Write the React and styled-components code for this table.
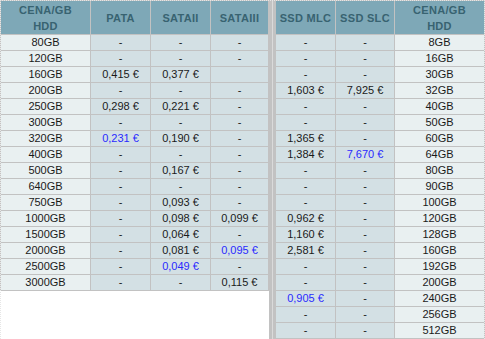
import React from "react";
import styled, { createGlobalStyle } from "styled-components";

const GlobalStyle = createGlobalStyle`
  html, body {
    margin: 0;
    padding: 0;
    background: #ffffff;
  }
  body {
    font-family: "Liberation Sans", Arial, sans-serif;
    font-size: 11px;
  }
`;

const hddRows = [
  ["80GB", "-", "-", "-"],
  ["120GB", "-", "-", "-"],
  ["160GB", "0,415 €", "0,377 €", ""],
  ["200GB", "-", "-", "-"],
  ["250GB", "0,298 €", "0,221 €", "-"],
  ["300GB", "-", "-", "-"],
  ["320GB", "*0,231 €", "0,190 €", "-"],
  ["400GB", "-", "-", "-"],
  ["500GB", "-", "0,167 €", "-"],
  ["640GB", "-", "-", "-"],
  ["750GB", "-", "0,093 €", "-"],
  ["1000GB", "-", "0,098 €", "0,099 €"],
  ["1500GB", "-", "0,064 €", "-"],
  ["2000GB", "-", "0,081 €", "*0,095 €"],
  ["2500GB", "-", "*0,049 €", "-"],
  ["3000GB", "-", "-", "0,115 €"],
];

const ssdRows = [
  ["-", "-", "8GB"],
  ["-", "-", "16GB"],
  ["-", "-", "30GB"],
  ["1,603 €", "7,925 €", "32GB"],
  ["-", "-", "40GB"],
  ["-", "-", "50GB"],
  ["1,365 €", "-", "60GB"],
  ["1,384 €", "*7,670 €", "64GB"],
  ["-", "-", "80GB"],
  ["-", "-", "90GB"],
  ["-", "-", "100GB"],
  ["0,962 €", "-", "120GB"],
  ["1,160 €", "-", "128GB"],
  ["2,581 €", "-", "160GB"],
  ["-", "-", "192GB"],
  ["-", "-", "200GB"],
  ["*0,905 €", "-", "240GB"],
  ["-", "-", "256GB"],
  ["-", "-", "512GB"],
];

// values starting with * are the best price, shown in blue
const Price = ({ value }) => {
  const best = value.startsWith("*");
  return <Cell $best={best}>{best ? value.slice(1) : value}</Cell>;
};

const App = () => {
  return (
    <>
      <GlobalStyle />
      <Page>
        <Table $width={269}>
          <colgroup>
            <col style={{ width: 90 }} />
            <col style={{ width: 60 }} />
            <col style={{ width: 60 }} />
            <col />
          </colgroup>
          <thead>
            <tr>
              <Head>
                CENA/GB
                <br />
                HDD
              </Head>
              <Head>PATA</Head>
              <Head>SATAII</Head>
              <Head>SATAIII</Head>
            </tr>
          </thead>
          <tbody>
            {hddRows.map(([size, ...prices]) => (
              <tr key={size}>
                <SizeCell>{size}</SizeCell>
                {prices.map((p, i) => (
                  <Price key={i} value={p} />
                ))}
              </tr>
            ))}
          </tbody>
        </Table>
        <RightSide>
          <Divider />
          <Table $width={210}>
            <colgroup>
              <col style={{ width: 60 }} />
              <col style={{ width: 59 }} />
              <col />
            </colgroup>
            <thead>
              <tr>
                <Head>SSD MLC</Head>
                <Head>SSD SLC</Head>
                <Head>
                  CENA/GB
                  <br />
                  HDD
                </Head>
              </tr>
            </thead>
            <tbody>
              {ssdRows.map(([mlc, slc, size]) => (
                <tr key={size}>
                  <Price value={mlc} />
                  <Price value={slc} />
                  <SizeCell>{size}</SizeCell>
                </tr>
              ))}
            </tbody>
          </Table>
        </RightSide>
      </Page>
    </>
  );
};
export default App;

const Page = styled.div`
  position: relative;
  width: 485px;
  height: 339px;
  display: flex;
  align-items: flex-start;
  overflow: hidden;
  &::after {
    content: "";
    position: absolute;
    inset: 0;
    border: 1px dotted #e6e6e6;
    border-bottom: none;
    box-sizing: border-box;
    pointer-events: none;
  }
`;

const Table = styled.table`
  width: ${(props) => props.$width}px;
  table-layout: fixed;
  border-collapse: collapse;
  font-family: "Liberation Sans", Arial, sans-serif;
  font-size: 11px;
  color: #1a1a1a;
  tr > * {
    border: 1px solid #c2c2c2;
    padding: 0;
    text-align: center;
    white-space: nowrap;
  }
  tbody td {
    height: 15px;
    line-height: 15px;
  }
`;

const Head = styled.th`
  background: #7ea8b7;
  color: #386371;
  font-weight: bold;
  font-size: 11px;
  height: 33px;
  line-height: 16px;
  letter-spacing: 0.3px;
  vertical-align: middle;
`;

const SizeCell = styled.td`
  background: #e9f0f1;
`;

const Cell = styled.td`
  background: #d3e0e4;
  color: ${(props) => (props.$best ? "#2a2aff" : "#1a1a1a")};
`;

const RightSide = styled.div`
  display: flex;
  align-items: stretch;
`;

const Divider = styled.div`
  width: 6px;
  background: linear-gradient(
    to right,
    #c2c2c2 0 3px,
    #dadada 3px 4px,
    #c2c2c2 4px 6px
  );
`;
